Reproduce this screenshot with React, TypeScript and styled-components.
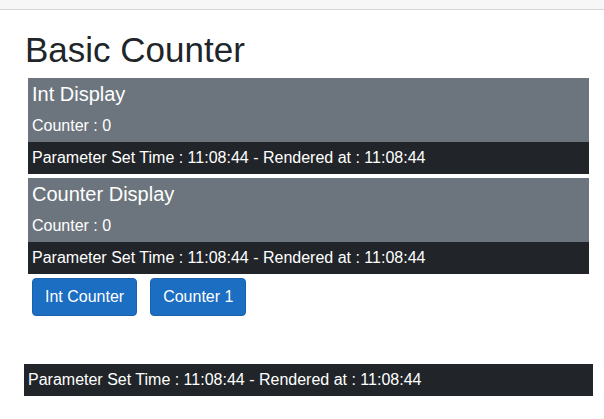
import { createGlobalStyle, styled } from "styled-components"

const GlobalStyle = createGlobalStyle`
  html, body {
    margin: 0;
    padding: 0;
    background: #fff;
  }
  body {
    font-family: "Liberation Sans", Arial, sans-serif;
    font-size: 16px;
    line-height: 1.5;
    color: #212529;
  }
`

const TopRow = styled.div`
  height: 9px;
  background-color: #f7f7f7;
  border-bottom: 1px solid #d6d5d5;
`

const Content = styled.main`
  padding: 0 11px 0 24px;
`

const Title = styled.h1`
  margin: 19px 0 7px 1px;
  font-size: 35px;
  font-weight: 400;
  line-height: 1.2;
`

const Panels = styled.div`
  margin: 0 4px;
  display: flex;
  flex-direction: column;
  gap: 4px;
`

const Panel = styled.section`
  background-color: #6c757d;
  color: #fff;
`

const PanelBody = styled.div`
  padding: 4px 4px 4px;
`

const PanelTitle = styled.h5`
  margin: 0 0 8px;
  font-size: 20px;
  font-weight: 400;
  line-height: 1.2;
`

const PanelText = styled.div`
  line-height: 24px;
`

const TimeBar = styled.div`
  background-color: #212529;
  color: #fff;
  line-height: 24px;
  padding: 4px;
`

const ButtonRow = styled.div`
  display: flex;
  gap: 13px;
  padding: 4px 0 0 8px;
`

const Button = styled.button`
  font-family: inherit;
  font-size: 16px;
  line-height: 24px;
  padding: 6px 12px;
  color: #fff;
  background-color: #1b6ec2;
  border: 1px solid #1861ac;
  border-radius: 4px;
  cursor: pointer;
`

const Footer = styled.div`
  margin-top: 48px;
`

const time = "11:08:44"

function Display({ title }: { title: string }) {
  return (
    <Panel>
      <PanelBody>
        <PanelTitle>{title}</PanelTitle>
        <PanelText>Counter : 0</PanelText>
      </PanelBody>
      <TimeBar>
        Parameter Set Time : {time} - Rendered at : {time}
      </TimeBar>
    </Panel>
  )
}

export default function App() {
  return (
    <>
      <GlobalStyle />
      <TopRow />
      <Content>
        <Title>Basic Counter</Title>
        <Panels>
          <Display title="Int Display" />
          <Display title="Counter Display" />
        </Panels>
        <ButtonRow>
          <Button>Int Counter</Button>
          <Button>Counter 1</Button>
        </ButtonRow>
        <Footer>
          <TimeBar>
            Parameter Set Time : {time} - Rendered at : {time}
          </TimeBar>
        </Footer>
      </Content>
    </>
  )
}
